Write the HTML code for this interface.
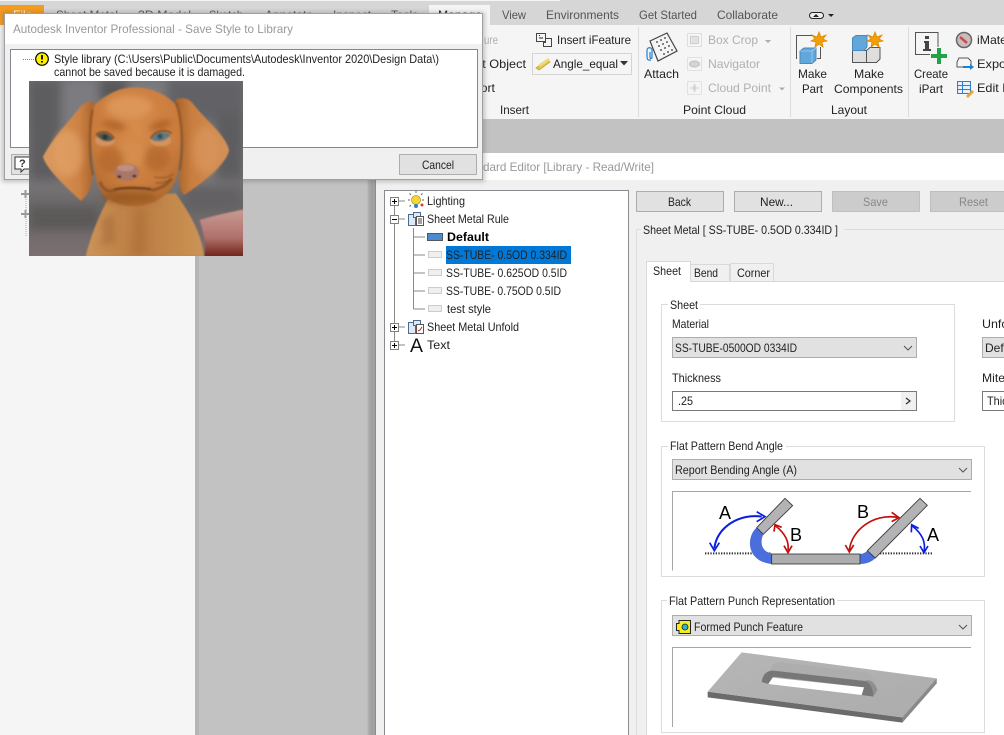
<!DOCTYPE html>
<html><head><meta charset="utf-8"><style>
html,body{margin:0;padding:0;background:#c2c2c2;overflow:hidden}
svg{display:block}
text{font-family:"Liberation Sans",sans-serif;font-size:12px;fill:#222}
.g{fill:#b0b0b0}.t{fill:#555}.l{fill:#999}
.ln{stroke:#888;fill:none}
</style></head><body>
<svg width="1004" height="735" viewBox="0 0 1004 735" xmlns="http://www.w3.org/2000/svg">
<defs>
<filter id="b1" x="-10%" y="-10%" width="120%" height="120%"><feGaussianBlur stdDeviation="2"/></filter>
<filter id="b2" x="-40%" y="-40%" width="180%" height="180%"><feGaussianBlur stdDeviation="10"/></filter>
<filter id="b3" x="-20%" y="-20%" width="140%" height="140%"><feGaussianBlur stdDeviation="15"/></filter>
<filter id="sh" x="-5%" y="-5%" width="110%" height="110%"><feGaussianBlur stdDeviation="2"/></filter>
<linearGradient id="bg" x1="0" y1="0" x2="0" y2="1"><stop offset="0" stop-color="#6f6f72"/><stop offset=".5" stop-color="#7d7b7d"/><stop offset=".72" stop-color="#6b6868"/><stop offset="1" stop-color="#7b6f70"/></linearGradient>
<linearGradient id="hand" x1="0" y1="0" x2="0" y2="1"><stop offset="0" stop-color="#c89a92"/><stop offset=".6" stop-color="#b0706a"/><stop offset="1" stop-color="#6e2218"/></linearGradient>
<linearGradient id="neck" x1="0" y1="0" x2="1" y2="0"><stop offset="0" stop-color="#cc9458"/><stop offset=".45" stop-color="#bb7c42"/><stop offset="1" stop-color="#cb9455"/></linearGradient>
<radialGradient id="head" cx=".5" cy=".35" r=".65"><stop offset="0" stop-color="#d68c4c"/><stop offset=".7" stop-color="#cb7d3e"/><stop offset="1" stop-color="#b26a30"/></radialGradient>
<linearGradient id="earL" x1="0" y1="0" x2="1" y2="0"><stop offset="0" stop-color="#dc9a60"/><stop offset=".7" stop-color="#cd8244"/><stop offset="1" stop-color="#a9622a"/></linearGradient>
<linearGradient id="earR" x1="1" y1="0" x2="0" y2="0"><stop offset="0" stop-color="#d49258"/><stop offset=".7" stop-color="#c97e40"/><stop offset="1" stop-color="#a56028"/></linearGradient>
<linearGradient id="plate" x1="0" y1="0" x2="1" y2="1"><stop offset="0" stop-color="#b6b6b6"/><stop offset="1" stop-color="#acacac"/></linearGradient>
</defs>

<!-- app background -->
<rect width="1004" height="735" fill="#c2c2c2"/>
<rect width="1004" height="25" fill="#d6d6d6"/>
<rect y="0" width="560" height="1" fill="#f5f5f5"/>
<rect y="25" width="1004" height="94" fill="#f5f5f5"/>
<rect x="0" y="119" width="195" height="616" fill="#f5f5f5"/>
<rect x="195" y="119" width="4" height="616" fill="#b5b5b5"/>

<!-- menu tabs -->
<rect x="0" y="5" width="44" height="20" fill="#f59c1f"/>
<text x="13" y="19" style="fill:#fff">File</text>
<text x="56" y="19" lengthAdjust="spacingAndGlyphs" textLength="62" class="t">Sheet Metal</text>
<text x="138" y="19" lengthAdjust="spacingAndGlyphs" textLength="53" class="t">3D Model</text>
<text x="209" y="19" lengthAdjust="spacingAndGlyphs" textLength="34" class="t">Sketch</text>
<text x="265" y="19" lengthAdjust="spacingAndGlyphs" textLength="48" class="t">Annotate</text>
<text x="333" y="19" lengthAdjust="spacingAndGlyphs" textLength="38" class="t">Inspect</text>
<text x="391" y="19" lengthAdjust="spacingAndGlyphs" textLength="27" class="t">Tools</text>
<rect x="429" y="5" width="61" height="20" fill="#f5f5f5"/>
<text x="438" y="19" lengthAdjust="spacingAndGlyphs" textLength="44">Manage</text>
<text x="502" y="19" lengthAdjust="spacingAndGlyphs" textLength="24" class="t">View</text>
<text x="546" y="19" lengthAdjust="spacingAndGlyphs" textLength="73" class="t">Environments</text>
<text x="639" y="19" lengthAdjust="spacingAndGlyphs" textLength="58" class="t">Get Started</text>
<text x="717" y="19" lengthAdjust="spacingAndGlyphs" textLength="61" class="t">Collaborate</text>
<rect x="809.500" y="12.500" width="14" height="6" rx="3" fill="#eee" stroke="#222"/>
<path d="M813 17l3-3 3 3z" fill="#222"/>
<path d="M828 14h6l-3 3z" fill="#222"/>

<!-- ribbon separators -->
<path d="M638.500 27V117M790.500 27V117M908.500 27V117" stroke="#dcdcdc"/>

<!-- Insert panel -->
<text x="484" y="44" class="g" lengthAdjust="spacingAndGlyphs" textLength="14">ure</text>
<text x="454" y="68" lengthAdjust="spacingAndGlyphs" textLength="72">Insert Object</text>
<text x="460" y="92" lengthAdjust="spacingAndGlyphs" textLength="35">Import</text>
<text x="500" y="114" lengthAdjust="spacingAndGlyphs" textLength="29">Insert</text>
<rect x="536.500" y="33.500" width="9" height="8" fill="#f5f5f5" stroke="#444"/>
<path d="M539 35.500h1M539 38h4" stroke="#222"/>
<path d="M546 38.500h5.500v8h-8v-4h2.500" fill="none" stroke="#444"/>
<text x="557" y="44" lengthAdjust="spacingAndGlyphs" textLength="74">Insert iFeature</text>
<rect x="532.500" y="53.500" width="99" height="21" fill="#f5f5f5" stroke="#d4d4d4"/>
<path d="M536 68l11-8 3 2-11 8z" fill="#e2c452" stroke="#c9a52f" stroke-width=".8"/>
<path d="M538 65l10-7 2 2-10 7z" fill="#f0d978"/>
<text x="553" y="68" lengthAdjust="spacingAndGlyphs" textLength="65">Angle_equal</text>
<path d="M620 61h8l-4 4.500z" fill="#333"/>

<!-- Point cloud -->
<path d="M650 41L667 33 677 51 658 61z" fill="#f4f4f4" stroke="#444" stroke-width="1.200"/>
<g fill="#333"><circle cx="657" cy="42" r=".9"/><circle cx="661" cy="40" r=".9"/><circle cx="665" cy="38" r=".9"/><circle cx="659" cy="46" r=".9"/><circle cx="663" cy="44" r=".9"/><circle cx="667" cy="42" r=".9"/><circle cx="661" cy="50" r=".9"/><circle cx="665" cy="48" r=".9"/><circle cx="669" cy="46" r=".9"/><circle cx="664" cy="54" r=".9"/><circle cx="668" cy="52" r=".9"/><circle cx="672" cy="50" r=".9"/></g>
<path d="M651 60c-4 1-4-2-4-4V50c0-3 5-3 5 0v7c0 2-2 2-2 0v-5" fill="none" stroke="#1d7fd0" stroke-width="1.200"/>
<text x="644" y="78" lengthAdjust="spacingAndGlyphs" textLength="35">Attach</text>
<rect x="687.500" y="33.500" width="14" height="13" fill="none" stroke="#c8c8c8" stroke-dasharray="1 1"/>
<rect x="690.500" y="36.500" width="8" height="7" fill="#e3e3e3" stroke="#cfcfcf"/>
<text x="708" y="44" lengthAdjust="spacingAndGlyphs" textLength="50" class="g">Box Crop</text>
<path d="M765 40h6l-3 3z" fill="#aaa"/>
<rect x="687.500" y="57.500" width="14" height="13" fill="none" stroke="#d0d0d0" stroke-dasharray="1 1"/>
<ellipse cx="694.500" cy="64" rx="5" ry="3" fill="#d4d4d4" stroke="#c0c0c0"/>
<text x="708" y="68" lengthAdjust="spacingAndGlyphs" textLength="52" class="g">Navigator</text>
<rect x="687.500" y="81.500" width="14" height="13" fill="none" stroke="#d0d0d0" stroke-dasharray="1 1"/>
<path d="M694.500 83l2 5 -2 5-2-5z" fill="#d4d4d4"/><path d="M690 88h9" stroke="#d4d4d4"/>
<text x="708" y="92" lengthAdjust="spacingAndGlyphs" textLength="63" class="g">Cloud Point</text>
<path d="M779 87.500h6l-3 3z" fill="#aaa"/>
<text x="683" y="114" lengthAdjust="spacingAndGlyphs" textLength="63">Point Cloud</text>

<!-- Layout -->
<path d="M796.500 59V35.500H813M820.500 47V58.500H817" fill="none" stroke="#555"/>
<path d="M800 51l4-3h12v12l-4 3.500h-12z" fill="#62a7dc" stroke="#4a88ba"/>
<path d="M800 51h12v12M812 51l4-3" fill="none" stroke="#a5cfee" stroke-width=".8"/>
<g transform="translate(819 40)"><path d="M0-8L2-3 7-5 4-1 8 1 3 2 4 7 0 4-4 7-3 2-8 1-4-1-7-5-2-3z" fill="#f2a007" stroke="#e08a00" stroke-width=".8"/></g>
<path d="M852.500 62.500V50.500H866.500V62.500zM866.500 62.500V50.500L870 47.500H880V59L876.500 62.500z" fill="#dedede" stroke="#555"/>
<path d="M852.500 50.500V38L856 35.500H867V47L864 50.500z" fill="#62a7dc" stroke="#4a88ba"/>
<g transform="translate(875 40)"><path d="M0-8L2-3 7-5 4-1 8 1 3 2 4 7 0 4-4 7-3 2-8 1-4-1-7-5-2-3z" fill="#f2a007" stroke="#e08a00" stroke-width=".8"/></g>
<text x="798" y="78" lengthAdjust="spacingAndGlyphs" textLength="29">Make</text>
<text x="802" y="93" lengthAdjust="spacingAndGlyphs" textLength="21">Part</text>
<text x="854" y="78" lengthAdjust="spacingAndGlyphs" textLength="30">Make</text>
<text x="834" y="93" lengthAdjust="spacingAndGlyphs" textLength="69">Components</text>
<text x="831" y="114" lengthAdjust="spacingAndGlyphs" textLength="36">Layout</text>

<!-- iPart -->
<path d="M930 54.500H915.500V32.500H938V47" fill="#f5f5f5" stroke="#555"/>
<path d="M925 36h4v3h-4zM924 41h5v8h2v2h-8v-2h2v-6h-1z" fill="#444"/>
<path d="M931 54h6v-6h4v6h6v4h-6v6h-4v-6h-6z" fill="#22a34a"/>
<text x="914" y="78" lengthAdjust="spacingAndGlyphs" textLength="34">Create</text>
<text x="919" y="93" lengthAdjust="spacingAndGlyphs" textLength="24">iPart</text>
<circle cx="964" cy="40" r="7.500" fill="#cdbcbc" stroke="#666" stroke-width="1.500"/>
<path d="M960 37l7 6" stroke="#c25050" stroke-width="2.500"/>
<text x="977" y="44" lengthAdjust="spacingAndGlyphs" textLength="30">iMate</text>
<path d="M957 62l2-4h9l3 3v6h-14z" fill="#f5f5f5" stroke="#555"/>
<path d="M963 66h7v-2l4 3-4 3v-2h-7z" fill="#1d7fd0"/>
<text x="977" y="68" lengthAdjust="spacingAndGlyphs" textLength="37">Export</text>
<rect x="957.500" y="81.500" width="13" height="12" fill="#e8f1fa" stroke="#2a7fd0"/>
<path d="M958 85.500h12M958 89.500h12M962.500 82v11" stroke="#2a7fd0"/>
<path d="M966 96l6-6 2 2-6 6z" fill="#e8a33a"/>
<text x="977" y="92" lengthAdjust="spacingAndGlyphs" textLength="33">Edit F</text>

<!-- left browser remnants -->
<path d="M19 179.500H29" stroke="#888"/>
<path d="M21 194h9M25.500 190v8M21 214h9M25.500 210v8" stroke="#999" stroke-width="2"/>
<path d="M26 199V236" stroke="#aaa" stroke-dasharray="1 1"/>

<!-- editor window -->
<rect x="368" y="150" width="10" height="600" fill="#888" filter="url(#sh)" opacity=".6"/>
<rect x="376" y="153" width="628" height="582" fill="#f0f0f0"/>
<rect x="376" y="153" width="628" height="27" fill="#fff"/>
<rect x="375" y="153" width="1" height="582" fill="#8c8c8c"/>
<text x="459" y="171" lengthAdjust="spacingAndGlyphs" textLength="195" class="l">Standard Editor [Library - Read/Write]</text>

<!-- tree -->
<rect x="384.500" y="190.500" width="244" height="560" fill="#fff" stroke="#888c90"/>
<path d="M394.500 201V345M413.500 228V309M399 201h6M399 219h6M399 327h6M399 345h6M413.500 237H425M413.500 255H425M413.500 273H425M413.500 291H425M413.500 309H425" stroke="#8a8a8a" fill="none"/>
<g fill="#fff" stroke="#808080">
<rect x="390.500" y="197.500" width="8" height="8"/><rect x="390.500" y="215.500" width="8" height="8"/><rect x="390.500" y="323.500" width="8" height="8"/><rect x="390.500" y="341.500" width="8" height="8"/>
</g>
<path d="M392 201.500h5M394.500 199v5M392 219.500h5M392 327.500h5M394.500 325v5M392 345.500h5M394.500 343v5" stroke="#000"/>
<!-- tree icons -->
<g>
<circle cx="416" cy="200" r="4.500" fill="#f5d73a" stroke="#b89a20" stroke-width=".8"/>
<path d="M416 193v-2M410 200h-2M424 200h-2M411 195l-1.500-1.500M421 195l1.500-1.500M411 205l-1.500 1.500" stroke="#666"/>
<circle cx="416" cy="206" r="2" fill="#2a7fd0"/><circle cx="422" cy="205" r="1.500" fill="#e33"/>
<rect x="408.500" y="214.500" width="7" height="11" fill="#dfe9f5" stroke="#4a6a90"/>
<rect x="413.500" y="212.500" width="7" height="5" fill="#dfe9f5" stroke="#4a6a90"/>
<rect x="416.500" y="216.500" width="7" height="9" fill="#fff" stroke="#555"/>
<path d="M418 219h4M418 221h4M418 223h4" stroke="#444"/>
<rect x="408.500" y="322.500" width="7" height="11" fill="#dfe9f5" stroke="#4a6a90"/>
<rect x="413.500" y="320.500" width="7" height="5" fill="#dfe9f5" stroke="#4a6a90"/>
<rect x="416.500" y="324.500" width="7" height="9" fill="#fff" stroke="#555"/>
<path d="M418 331l2-1 2-3" stroke="#c22" fill="none"/>
<rect x="427.500" y="233.500" width="15" height="7" fill="#4a8cce" stroke="#555"/>
<rect x="428.500" y="251.500" width="13" height="6" fill="#efefef" stroke="#ccc"/>
<rect x="428.500" y="269.500" width="13" height="6" fill="#efefef" stroke="#ccc"/>
<rect x="428.500" y="287.500" width="13" height="6" fill="#efefef" stroke="#ccc"/>
<rect x="428.500" y="305.500" width="13" height="6" fill="#efefef" stroke="#ccc"/>
<text x="410" y="352" style="font-size:19px;fill:#111" lengthAdjust="spacingAndGlyphs" textLength="13">A</text>
</g>
<text x="427" y="205" lengthAdjust="spacingAndGlyphs" textLength="38">Lighting</text>
<text x="427" y="223" lengthAdjust="spacingAndGlyphs" textLength="82">Sheet Metal Rule</text>
<text x="447" y="241" lengthAdjust="spacingAndGlyphs" textLength="42" style="font-weight:bold;fill:#000">Default</text>
<rect x="446" y="246" width="125" height="18" fill="#0078d7"/>
<text x="446" y="259" lengthAdjust="spacingAndGlyphs" textLength="121">SS-TUBE- 0.5OD 0.334ID</text>
<text x="446" y="277" lengthAdjust="spacingAndGlyphs" textLength="121">SS-TUBE- 0.625OD 0.5ID</text>
<text x="446" y="295" lengthAdjust="spacingAndGlyphs" textLength="115">SS-TUBE- 0.75OD 0.5ID</text>
<text x="447" y="313" lengthAdjust="spacingAndGlyphs" textLength="44">test style</text>
<text x="427" y="331" lengthAdjust="spacingAndGlyphs" textLength="92">Sheet Metal Unfold</text>
<text x="427" y="349" lengthAdjust="spacingAndGlyphs" textLength="23">Text</text>

<!-- buttons -->
<g stroke="#adadad" fill="#e1e1e1">
<rect x="636.500" y="191.500" width="87" height="20"/>
<rect x="734.500" y="191.500" width="87" height="20"/>
<rect x="832.500" y="191.500" width="87" height="20" fill="#cccccc" stroke="#bfbfbf"/>
<rect x="930.500" y="191.500" width="87" height="20" fill="#cccccc" stroke="#bfbfbf"/>
</g>
<text x="668" y="206" lengthAdjust="spacingAndGlyphs" textLength="23">Back</text>
<text x="760" y="206" lengthAdjust="spacingAndGlyphs" textLength="33">New...</text>
<text x="863" y="206" lengthAdjust="spacingAndGlyphs" textLength="25" style="fill:#888">Save</text>
<text x="959" y="206" lengthAdjust="spacingAndGlyphs" textLength="29" style="fill:#888">Reset</text>

<!-- sheet metal group -->
<path d="M641 229.500H636.500V735M844 229.500H1004" fill="none" stroke="#dcdcdc"/>
<text x="643" y="234" lengthAdjust="spacingAndGlyphs" textLength="195">Sheet Metal [ SS-TUBE- 0.5OD 0.334ID ]</text>

<!-- tabs -->
<rect x="646" y="282" width="358" height="453" fill="#fff"/>
<path d="M646.500 735V282M690 281.500H1004" stroke="#d9d9d9" fill="none"/>
<rect x="690.500" y="264.500" width="39" height="17" fill="#f0f0f0" stroke="#d9d9d9"/>
<rect x="730.500" y="263.500" width="43" height="18" fill="#f0f0f0" stroke="#d9d9d9"/>
<path d="M646.500 282V261.500H690.500V282" fill="#fff" stroke="#d9d9d9"/>
<text x="653" y="275" lengthAdjust="spacingAndGlyphs" textLength="28">Sheet</text>
<text x="694" y="277" lengthAdjust="spacingAndGlyphs" textLength="24">Bend</text>
<text x="737" y="277" lengthAdjust="spacingAndGlyphs" textLength="33">Corner</text>

<!-- Sheet group -->
<rect x="661.500" y="304.500" width="293" height="117" fill="none" stroke="#dcdcdc"/>
<rect x="668" y="300" width="32" height="8" fill="#fff"/>
<text x="670" y="309" lengthAdjust="spacingAndGlyphs" textLength="28">Sheet</text>
<text x="672" y="328" lengthAdjust="spacingAndGlyphs" textLength="37">Material</text>
<rect x="672.500" y="337.500" width="244" height="20" fill="#e1e1e1" stroke="#adadad"/>
<text x="675" y="352" lengthAdjust="spacingAndGlyphs" textLength="122">SS-TUBE-0500OD 0334ID</text>
<path d="M904 346l4 4 4-4" fill="none" stroke="#555"/>
<text x="672" y="382" lengthAdjust="spacingAndGlyphs" textLength="49">Thickness</text>
<rect x="672.500" y="391.500" width="244" height="19" fill="#fff" stroke="#7a7a7a"/>
<rect x="901" y="392" width="15" height="18" fill="#f0f0f0"/>
<path d="M906 398l4 3-4 3" fill="none" stroke="#333" stroke-width="1.300"/>
<text x="678" y="405" lengthAdjust="spacingAndGlyphs" textLength="15">.25</text>
<text x="982" y="328" lengthAdjust="spacingAndGlyphs" textLength="36">Unfold</text>
<rect x="982.500" y="337.500" width="30" height="20" fill="#e1e1e1" stroke="#adadad"/>
<text x="985" y="352" lengthAdjust="spacingAndGlyphs" textLength="38">Default</text>
<text x="982" y="382" lengthAdjust="spacingAndGlyphs" textLength="27">Miter</text>
<rect x="982.500" y="391.500" width="30" height="19" fill="#fff" stroke="#7a7a7a"/>
<text x="987" y="405" lengthAdjust="spacingAndGlyphs" textLength="49">Thickness</text>

<!-- Bend angle group -->
<rect x="661.500" y="446.500" width="323" height="130" fill="none" stroke="#dcdcdc"/>
<rect x="668" y="442" width="118" height="8" fill="#fff"/>
<text x="670" y="450" lengthAdjust="spacingAndGlyphs" textLength="113">Flat Pattern Bend Angle</text>
<rect x="672.500" y="459.500" width="299" height="20" fill="#e1e1e1" stroke="#adadad"/>
<text x="675" y="474" lengthAdjust="spacingAndGlyphs" textLength="122">Report Bending Angle (A)</text>
<path d="M959 468l4 4 4-4" fill="none" stroke="#555"/>
<path d="M672.500 570.500V491.500H971" fill="none" stroke="#a6a6a6"/>
<g transform="translate(660 480) scale(.33333)">
<path d="M135 220H335M620 220H820" stroke="#333" stroke-width="6" stroke-dasharray="4 4" fill="none"/>
<path d="M290 143C258 170 258 244 335 252V220C312 218 296 195 310 163z" fill="#4a6fdc"/>
<path d="M622 212l24 22c-10 12-28 18-46 18v-30c10 0 16-4 22-10z" fill="#4a6fdc"/>
<path d="M290 143L375 55 398 77 310 163z" fill="#b3b3b5" stroke="#333" stroke-width="2.500"/>
<path d="M622 212L780 55 802 76 646 234z" fill="#b3b3b5" stroke="#333" stroke-width="2.500"/>
<rect x="335" y="222" width="265" height="30" fill="#adadb0" stroke="#333" stroke-width="2.500"/>
<path d="M163 205C170 140 240 100 305 110" fill="none" stroke="#0a1ee0" stroke-width="6"/>
<path d="M149 188L163 212 178 188M290 95L315 110 290 125" fill="none" stroke="#0a1ee0" stroke-width="5"/>
<path d="M347 138C375 160 388 185 384 212" fill="none" stroke="#c40f0f" stroke-width="5"/>
<path d="M342 155L345 134 365 142M372 197L384 218 396 197" fill="none" stroke="#c40f0f" stroke-width="5"/>
<path d="M568 210C575 150 640 100 712 112" fill="none" stroke="#c40f0f" stroke-width="5"/>
<path d="M556 195L568 216 581 195M695 97L717 113 695 125" fill="none" stroke="#c40f0f" stroke-width="5"/>
<path d="M757 138C785 160 798 185 792 214" fill="none" stroke="#0a1ee0" stroke-width="5"/>
<path d="M754 157L755 134 776 145M780 198L792 218 804 198" fill="none" stroke="#0a1ee0" stroke-width="5"/>
</g>
<text x="719" y="519" style="font-size:18px;fill:#000">A</text>
<text x="790" y="541" style="font-size:18px;fill:#000">B</text>
<text x="857" y="518" style="font-size:18px;fill:#000">B</text>
<text x="927" y="541" style="font-size:18px;fill:#000">A</text>

<!-- Punch group -->
<rect x="661.500" y="600.500" width="323" height="132" fill="none" stroke="#dcdcdc"/>
<rect x="667" y="596" width="170" height="8" fill="#fff"/>
<text x="669" y="605" lengthAdjust="spacingAndGlyphs" textLength="166">Flat Pattern Punch Representation</text>
<rect x="672.500" y="615.500" width="299" height="20" fill="#e1e1e1" stroke="#adadad"/>
<path d="M679 620.500h11.500v13H679v-3h-2.500v-7H679z" fill="#f7ee1e" stroke="#222"/>
<circle cx="685" cy="627" r="3" fill="#2bb6c9" stroke="#222" stroke-width=".8"/>
<text x="694" y="631" lengthAdjust="spacingAndGlyphs" textLength="109">Formed Punch Feature</text>
<path d="M959 625l4 4 4-4" fill="none" stroke="#555"/>
<path d="M672.500 727V647.500H971" fill="none" stroke="#a6a6a6"/>
<g transform="translate(660 480) scale(.33333)">
<path d="M143 635V652L727 728 830 610V595L727 712z" fill="#6b6b6b"/>
<path d="M727 712V728L830 610V595z" fill="#8a8a8a"/>
<path d="M245 517L830 595 727 712 143 635z" fill="url(#plate)"/>
<path d="M330 572C335 552 345 548 365 547L620 578C635 585 650 605 655 630L640 650 330 605z" fill="#adadad"/>
<path d="M305 606C308 585 318 572 340 572L615 603C632 608 640 625 640 650L605 645 612 622 340 590 325 612z" fill="#777"/>
<path d="M325 612L338 593 612 622 605 645z" fill="#fff"/>
<path d="M615 603C632 595 645 610 652 630L640 650C640 625 632 608 615 603z" fill="#8f8f8f"/>
</g>

<!-- dialog -->
<rect x="2" y="12" width="483" height="170" fill="#555" opacity=".3" filter="url(#sh)"/>
<rect x="4.500" y="13.500" width="478" height="166" fill="#f0f0f0" stroke="#a0a0a0"/>
<rect x="5" y="14" width="477" height="30" fill="#fff"/>
<text x="13" y="33" lengthAdjust="spacingAndGlyphs" textLength="280" class="l">Autodesk Inventor Professional - Save Style to Library</text>
<rect x="10.500" y="49.500" width="467" height="98" fill="#fff" stroke="#828790"/>
<path d="M23 59.500H35" stroke="#888" stroke-dasharray="1 1"/>
<circle cx="42" cy="59" r="6.300" fill="#ffef00" stroke="#000" stroke-width="1.200"/>
<path d="M42 55v4.500M42 61v1.500" stroke="#000" stroke-width="1.800"/>
<text x="54" y="63" lengthAdjust="spacingAndGlyphs" textLength="385">Style library (C:\Users\Public\Documents\Autodesk\Inventor 2020\Design Data\)</text>
<text x="54" y="76" lengthAdjust="spacingAndGlyphs" textLength="191">cannot be saved because it is damaged.</text>
<rect x="11.500" y="154.500" width="30" height="20" fill="#e1e1e1" stroke="#adadad"/>
<path d="M15 157h18v12h-9l-3 3v-3h-6z" fill="#fff" stroke="#333"/>
<text x="19" y="167" style="font-weight:bold;fill:#333;font-size:11px">?</text>
<rect x="399.500" y="154.500" width="77" height="20" fill="#e1e1e1" stroke="#adadad"/>
<text x="422" y="169" lengthAdjust="spacingAndGlyphs" textLength="32">Cancel</text>

<!-- dog photo -->
<svg x="29" y="81" width="214" height="175" viewBox="0 3 642 525">
<rect x="0" y="0" width="642" height="530" fill="url(#bg)"/>
<g filter="url(#b3)">
<rect x="0" y="0" width="95" height="300" fill="#5d5c5e"/>
<rect x="100" y="0" width="110" height="200" fill="#7b7c80"/>
<rect x="210" y="0" width="85" height="60" fill="#56565a"/>
<rect x="300" y="0" width="110" height="50" fill="#7b7c80"/>
<rect x="415" y="0" width="230" height="120" fill="#626266"/>
<rect x="560" y="100" width="85" height="200" fill="#5d5d60"/>
<rect x="0" y="380" width="210" height="70" fill="#5b5858"/>
<rect x="460" y="320" width="180" height="70" fill="#646163"/>
</g>
<g filter="url(#b1)">
<path d="M512 420C560 405 610 395 645 388V530H525C535 490 520 450 512 420z" fill="url(#hand)"/>
<path d="M240 350C215 400 190 450 170 530H525C520 470 490 410 440 340z" fill="url(#neck)"/>
<path d="M190 80C240 35 280 22 315 22C370 22 420 45 450 85C465 150 455 240 440 300C420 350 370 378 310 378C260 378 215 350 205 310C190 250 175 150 190 80z" fill="url(#head)"/>
<path d="M195 68C180 62 165 66 150 85C120 125 70 175 42 230C50 265 110 320 155 362C175 350 190 320 192 285C180 240 178 150 197 70z" fill="url(#earL)"/>
<path d="M438 60C455 50 480 52 495 75C530 120 590 165 600 210C595 250 520 310 465 345C450 325 445 290 452 265C465 200 460 120 438 60z" fill="url(#earR)"/>
</g>
<!-- soft shading -->
<g filter="url(#b2)">
<path d="M215 420C225 450 225 480 205 500L260 490 255 400z" fill="#9c6230" opacity=".45"/>
<path d="M320 390L300 520H355L350 390z" fill="#9f6330" opacity=".3"/>
<ellipse cx="300" cy="80" rx="70" ry="35" fill="#de9a5c" opacity=".8"/>
<path d="M210 130C250 115 280 125 295 150L255 150zM355 150C375 120 410 115 435 125L400 150z" fill="#ad5c24" opacity=".9"/>
<ellipse cx="305" cy="225" rx="45" ry="40" fill="#d68e50" opacity=".8"/>
<ellipse cx="245" cy="240" rx="40" ry="40" fill="#b06526" opacity=".7"/>
<ellipse cx="385" cy="235" rx="40" ry="40" fill="#b06526" opacity=".7"/>
<ellipse cx="300" cy="352" rx="85" ry="18" fill="#8e5220" opacity=".7"/>
<ellipse cx="115" cy="220" rx="45" ry="70" fill="#e2a268" opacity=".7"/>
<ellipse cx="530" cy="210" rx="40" ry="70" fill="#dc9a60" opacity=".6"/>
</g>
<g filter="url(#b1)">
<ellipse cx="228" cy="182" rx="30" ry="16" fill="#d69a68" opacity=".75"/>
<ellipse cx="395" cy="182" rx="32" ry="17" fill="#d69a68" opacity=".75"/>
<path d="M203 166C218 154 240 156 254 178C238 188 218 186 203 166z" fill="#4d5a52"/>
<path d="M366 178C375 156 405 150 424 164C412 184 385 190 366 178z" fill="#5e7a80"/>
<circle cx="228" cy="171" r="8" fill="#2f3430"/><circle cx="393" cy="169" r="8" fill="#3a4f54"/>
<path d="M200 164C218 150 242 152 256 176M364 176C376 152 408 146 428 160" stroke="#7a4a24" stroke-width="4" fill="none"/>
<path d="M212 305C222 330 240 340 262 328C295 322 340 325 372 330C395 325 415 315 428 295" stroke="#8a5224" stroke-width="9" fill="none" opacity=".8"/>
<path d="M255 328C290 322 335 322 365 327" stroke="#5e3212" stroke-width="4" fill="none" opacity=".85"/>
<path d="M375 290C395 295 415 295 432 282M380 308C395 312 412 306 428 298" stroke="#7b4a20" stroke-width="3" fill="none" opacity=".7"/>
<ellipse cx="293" cy="277" rx="38" ry="25" fill="#a97767"/>
<ellipse cx="290" cy="264" rx="26" ry="10" fill="#be9082"/>
<ellipse cx="271" cy="290" rx="6" ry="4" fill="#40251c"/><ellipse cx="316" cy="288" rx="6" ry="4" fill="#40251c"/>
<path d="M190 90C180 150 180 230 192 285" stroke="#804a20" stroke-width="6" fill="none" opacity=".7"/>
<path d="M442 70C462 130 462 210 452 270" stroke="#804a20" stroke-width="6" fill="none" opacity=".7"/>
</g>
</svg>
</svg>
</body></html>
